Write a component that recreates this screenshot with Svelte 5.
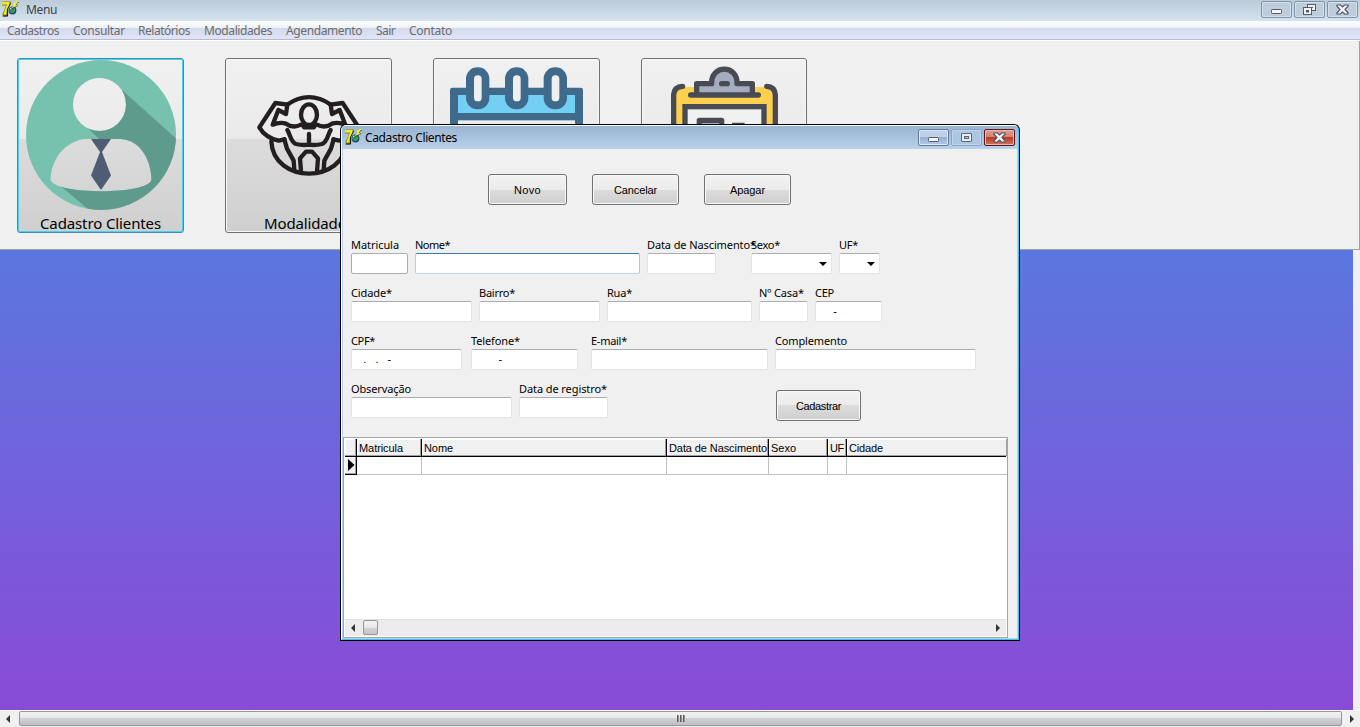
<script>
  const menu = [
    ['Cadastros', 52, 7], ['Consultar', 52, 14], ['Relatórios', 52, 13], ['Modalidades', 68, 14],
    ['Agendamento', 76, 14], ['Sair', 19, 14], ['Contato', 43, 14]
  ];
  const actions = [['Novo', 79, 27, 0], ['Cancelar', 87, 43, 25], ['Apagar', 87, 35, 25]];
  // label, label width, field width, left gap, kind, mask
  const rows = [
    [
      ['Matricula', 48, 57, 0, 'plain'], ['Nome*', 35, 225, 7, 'focus'], ['Data de Nascimento*', 109, 69, 7],
      ['Sexo*', 29, 81, 35, 'combo'], ['UF*', 19, 41, 7, 'combo']
    ],
    [
      ['Cidade*', 41, 121, 0], ['Bairro*', 36, 121, 7], ['Rua*', 25, 145, 7], ['Nº Casa*', 45, 49, 7],
      ['CEP', 19, 67, 7, '', '     -']
    ],
    [
      ['CPF*', 24, 111, 0, '', '   .   .   -'], ['Telefone*', 49, 107, 9, '', '        -'],
      ['E-mail*', 36, 177, 13], ['Complemento', 72, 201, 7]
    ],
    [['Observação', 60, 161, 0], ['Data de registro*', 88, 89, 7]]
  ];
  const columns = [
    ['Matricula', 65, 44], ['Nome', 245, 29], ['Data de Nascimento', 102, 98], ['Sexo', 59, 25], ['UF', 19, 14], ['Cidade', 160, 34]
  ];

  // Spreads the letters so that a caption takes exactly the given width.
  function fit(node, width) {
    const natural = node.getBoundingClientRect().width;
    const gap = (width - natural) / node.textContent.length;
    node.style.letterSpacing = gap + 'px';
  }
</script>

{#snippet appIcon()}
  <svg class="app-icon" width="18" height="18" viewBox="0 0 18 18">
    <path d="M1 1.500H10V4L7.500 8.500L7 16.500H1.500V14L4 8L5 5.500H1Z" fill="#8c8420" />
    <path d="M9.500 3L6.500 9L6.500 16H2" fill="none" stroke="#1d1c10" stroke-width="1" />
    <path d="M1 2H8.500V4L6 9L5.200 14.500H2.500L4.200 9L6 4.500H1Z" fill="#f3e81c" />
    <circle cx="11.500" cy="10.500" r="3.900" fill="#1f4d66" />
    <circle cx="11" cy="10" r="2.900" fill="#3a7f9a" />
    <path d="M10 8L12.500 7.500L14 10L12.500 13L10 12.500L11 10.500Z" fill="#38a044" />
    <path d="M9 9L10 8" stroke="#bfe6ea" />
    <path d="M16.500 .500L12.500 3.500L13.500 5L10.500 8.500L16 6L15 4.500L17.500 1.500Z" fill="#f8f020" />
    <path d="M17.500 2L15.500 4.300L16.500 6L11.500 8.500" fill="none" stroke="#1c1c10" stroke-width=".9" stroke-dasharray="1.500 .8" />
  </svg>
{/snippet}

{#snippet closeGlyph()}
  <svg width="13" height="11" viewBox="0 0 13 11">
    <path d="M1 1H4.5L6.5 3L8.5 1H12V2.2L9 5.5L12 8.8V10H8.5L6.5 8L4.5 10H1V8.8L4 5.5L1 2.2Z" fill="#f3f3f3" stroke="#50566b" stroke-width="1.2" />
  </svg>
{/snippet}

{#snippet minGlyph()}
  <svg width="11" height="5" viewBox="0 0 11 5"><rect x=".5" y=".5" width="10" height="4" rx=".8" fill="#f5f5f5" stroke="#555b6e" /></svg>
{/snippet}

<div class="screen">
  <header class="titlebar">
    {@render appIcon()}
    <span class="title"><span use:fit={31}>Menu</span></span>
    <div class="controls">
      <span class="ctl min">{@render minGlyph()}</span>
      <span class="ctl">
        <svg width="13" height="11" viewBox="0 0 13 11">
          <rect x="4.500" y=".500" width="8" height="6" fill="#f1f1f1" stroke="#555b6e" />
          <rect x="7" y="3" width="3" height="1" fill="#555b6e" />
          <rect x=".500" y="3.500" width="8" height="7" fill="#f5f5f5" stroke="#555b6e" />
          <rect x="3.500" y="6.500" width="2" height="1.500" fill="#a8b5c7" stroke="#555b6e" />
        </svg>
      </span>
      <span class="ctl">{@render closeGlyph()}</span>
    </div>
  </header>

  <nav class="menu">
    {#each menu as [text, width, gap]}
      <span class="menu-item" style="width:{width}px;margin-left:{gap}px"><span use:fit={width}>{text}</span></span>
    {/each}
  </nav>

  <section class="toolbar">
    <div class="tile selected">
      <svg width="167" height="175" viewBox="17 58 167 175">
        <defs>
          <mask id="figure">
            <rect x="17" y="58" width="167" height="175" fill="#fff" />
            <circle cx="99.500" cy="104.500" r="26.500" fill="#000" />
            <path d="M85 139H121C139 140 151 158 151.500 180C147 195 56 195 50.500 180C51 158 66 141 85 139Z" fill="#000" />
          </mask>
          <clipPath id="disc"><circle cx="101" cy="135" r="75" /></clipPath>
        </defs>
        <circle cx="101" cy="135" r="75" fill="#76c2ae" mask="url(#figure)" />
        <g clip-path="url(#disc)">
          <path mask="url(#figure)" d="M122 90L182 144V215H95L57 183L99 139L87 127Z" fill="#5f9b8c" />
        </g>
        <path d="M91 139H111L102 152L111 175.500L101 190L91 175.500L100 152Z" fill="#4f5d73" />
      </svg>
      <span class="caption"><span use:fit={121}>Cadastro Clientes</span></span>
    </div>
    <div class="tile">
      <svg width="167" height="175" viewBox="-81 -90 501 525">
        <g fill="none" stroke="#231f20" stroke-width="13" stroke-linejoin="round" stroke-linecap="round">
          <path d="M105 50Q171 5 237 50" />
          <path d="M58 160C64 289 278 289 284 160" />
          <ellipse cx="171" cy="80" rx="24" ry="31" />
          <path d="M106 50L102 78L79 66L62 110Q84 101 102 107C117 118 132 118 147 110Q153 110 156 118H186Q189 110 195 110C210 118 225 118 240 107Q258 101 280 110L263 66L240 78L236 50" />
          <path d="M106 50L70 45L22 118Q40 149 80 158L98 154M236 50L272 45L320 118Q302 149 262 158L244 154" />
          <path d="M106 126C115 140 116 162 132 168Q152 173 171 170Q190 173 210 168C226 162 227 140 236 126M171 138V170" />
          <path d="M97 154L105 182L125 218L127 247M245 154L237 182L217 218L215 247" />
          <path d="M147 250L144 211L162 191H180L198 211L195 250" />
        </g>
      </svg>
      <span class="caption"><span use:fit={89}>Modalidades</span></span>
    </div>
    <div class="tile">
      <svg width="167" height="175" viewBox="39 24 501 525">
        <rect x="90" y="113" width="399" height="340" rx="7" fill="#3f6a8c" />
        <rect x="114" y="135" width="351" height="54" fill="#74cff4" />
        <rect x="114" y="211" width="351" height="220" fill="#eceded" />
        {#each [138, 255, 371] as x}
          <rect {x} y="52" width="70" height="126" rx="34" fill="#3f6a8c" />
          <rect x={x + 24} y="76" width="23" height="78" rx="11" fill="#efefef" />
        {/each}
      </svg>
      <span class="caption">Agendamento</span>
    </div>
    <div class="tile narrow">
      <svg width="167" height="175" viewBox="663 24 501 525">
        <rect x="764" y="111" width="301" height="350" rx="14" fill="#ffd04d" />
        <path d="M788 109Q763 110 761 134V450M1040 109Q1064 110 1066 134V450" fill="none" stroke="#484b54" stroke-width="16" stroke-linecap="round" />
        <rect x="795" y="170" width="237" height="280" fill="#f0f1f1" stroke="#484b54" stroke-width="16" />
        <path d="M830 131V101H875C872 43 954 43 951 101H997V131" fill="#a3adbf" stroke="#484b54" stroke-width="16" stroke-linejoin="round" />
        <path d="M812 135H1015M905 101H922" stroke="#484b54" stroke-width="16" stroke-linecap="round" />
        <path d="M838 230V211H905V230M936 226H974" fill="#a3adbf" stroke="#484b54" stroke-width="16" stroke-linejoin="round" />
      </svg>
      <span class="caption">Relatórios</span>
    </div>
  </section>

  <main class="desk"><div class="backdrop"></div></main>

  <footer class="main-scroll">
    <span class="arrow left"></span>
    <div class="thumb"><i></i><i></i><i></i></div>
    <span class="arrow right"></span>
  </footer>

  <div class="window">
    <div class="inner">
      <div class="win-title">
        {@render appIcon()}
        <span class="title"><span use:fit={92}>Cadastro Clientes</span></span>
        <div class="controls">
          <span class="ctl blue min">{@render minGlyph()}</span>
          <span class="ctl faded">
            <svg width="11" height="9" viewBox="0 0 11 9"><rect x=".500" y=".500" width="10" height="8" rx=".5" fill="#e8ebef" stroke="#5c6478" /><rect x="3.500" y="3.500" width="4" height="2" fill="#a8c0dc" stroke="#5c6478" /></svg>
          </span>
          <span class="ctl red">{@render closeGlyph()}</span>
        </div>
      </div>

      <div class="body">
        <div class="actions">
          {#each actions as [text, width, textWidth, gap]}
            <div class="btn" style="width:{width}px;margin-left:{gap}px"><span use:fit={textWidth}>{text}</span></div>
          {/each}
        </div>

        <div class="form">
          {#each rows as row, r}
            <div class="row">
              {#each row as [label, labelWidth, width, gap, kind, mask]}
                <div class="cell" style="width:{width}px;margin-left:{gap}px">
                  <div class="label"><span use:fit={labelWidth}>{label}</span></div>
                  <div class="field {kind || ''}">{mask || ''}</div>
                </div>
              {/each}
              {#if r === 3}
                <div class="btn save"><span use:fit={45}>Cadastrar</span></div>
              {/if}
            </div>
          {/each}
        </div>

        <div class="grid">
          <div class="grid-head">
            <span class="gutter"></span>
            {#each columns as [text, width, textWidth]}
              <span class="th" style="width:{width}px"><span use:fit={textWidth}>{text}</span></span>
            {/each}
          </div>
          <div class="grid-row">
            <span class="gutter marker"><svg width="7" height="12" viewBox="0 0 7 12"><path d="M0 0L6.500 6L0 12Z" /></svg></span>
            {#each columns as [, width]}
              <span class="td" style="width:{width}px"></span>
            {/each}
          </div>
          <div class="grid-space"></div>
          <div class="grid-scroll">
            <span class="arrow left"></span>
            <span class="mini-thumb"></span>
            <span class="arrow right"></span>
          </div>
        </div>
      </div>
    </div>
  </div>
</div>

<style>
  :global(body) { overflow: hidden; }
  .screen, .screen * { box-sizing: border-box; }
  .screen { position: relative; width: 1360px; height: 727px; overflow: hidden; display: flex; flex-direction: column; background: #f0f0f0; font: 12px "Noto Sans", "Open Sans", sans-serif; color: #000; }
  svg { display: block; flex: none; }
  span { white-space: pre; }

  .titlebar { height: 21px; flex: none; display: flex; background: linear-gradient(#bccbd9, #d5e3f0); color: #3c434a; padding-left: 1px; }
  .titlebar .title { margin-left: 7px; line-height: 19px; }
  .controls { margin-left: auto; display: flex; gap: 2px; }
  .titlebar .controls { padding: 1px 2px 0 0; }
  .ctl { width: 31px; height: 17px; display: flex; align-items: center; justify-content: center; border: 1px solid #8393a9; border-radius: 2px; box-shadow: inset 0 0 0 1px #d3dfe9; background: #bfcddb; }
  .ctl.min { padding-top: 4px; }

  .menu { height: 20px; flex: none; display: flex; color: #6d6d6d; background: linear-gradient(#fff 0, #edf1f8 7px, #d3daed 7px, #e0e5f7 18px, #b6bccc 18px, #b6bccc 19px, #fff 19px); }
  .menu-item { line-height: 20px; height: 20px; }

  .toolbar { height: 209px; flex: none; display: flex; gap: 41px; padding: 17px 0 0 17px; border-bottom: 1px solid #a0a0a0; border-right: 1px solid #a0a0a0; }
  .tile { position: relative; width: 167px; height: 175px; border-radius: 3px; border: 1px solid #707070; box-shadow: inset 0 0 0 1px #f8f8f8; background: linear-gradient(#f1f1f1, #eaeaea 46%, #dcdcdc 46%, #cfcfcf); }
  .tile.narrow { width: 166px; }
  .tile.selected { border-color: #3c8cb6; box-shadow: inset 0 0 0 1px #48d0f5; }
  .tile svg { margin: -1px; }
  .caption { position: absolute; left: 0; right: 0; bottom: -2px; text-align: center; font-size: 15px; line-height: 22px; }

  .desk { height: 460px; flex: none; display: flex; }
  .backdrop { width: 1353px; background: linear-gradient(#5b77e0, #8a4bd6); }

  .main-scroll { height: 17px; flex: none; display: flex; border-top: 1px solid #fff; background: #f0f0f0; }
  .main-scroll .arrow { width: 19px; }
  .main-scroll .right { width: 18px; padding-left: 1px; }
  .thumb { flex: 1; height: 15px; display: flex; gap: 1px; align-items: center; justify-content: center; border: 1px solid #979797; border-radius: 2px; background: linear-gradient(#f3f3f3, #e6e7e8 45%, #d2d3d6 46%, #bebfc4); }
  .thumb i { width: 2px; height: 7px; background: linear-gradient(90deg, #444, #aaa); }
  .arrow { display: flex; align-items: center; justify-content: center; }
  .arrow::before { content: ""; border: solid transparent; border-width: 4px 0; }
  .arrow.left::before { border-right: 4px solid #333; }
  .arrow.right::before { border-left: 4px solid #333; }
  .main-scroll .left { padding-right: 4px; }

  .window { position: absolute; left: 340px; top: 124px; width: 680px; height: 517px; background: #000; border-radius: 6px 6px 0 0; padding: 1px; }
  .inner { height: 100%; border-radius: 5px 5px 0 0; border: 1px solid #35c7ef; border-left-color: #fff; border-top-color: #f6fbff; background: #b9d1ea; padding: 0 1px 1px; display: flex; flex-direction: column; }
  .win-title { height: 23px; display: flex; background: linear-gradient(#99b4d1, #b9d1ea); border-radius: 4px 4px 0 0; margin: 0 -1px; padding-left: 2px; }
  .win-title .title { margin-left: 3px; line-height: 23px; font-size: 12px; }
  .win-title .app-icon { margin-top: 2px; }
  .win-title .controls { padding: 3px 3px 0 0; }
  .ctl.blue { border-color: #60799c; background: linear-gradient(#bfd0e8 50%, #97b0d2 50%, #afcbe8); box-shadow: inset 0 0 0 1px #dce9f7; }
  .ctl.faded { border-color: #8ca5c6; background: #adc6e1; box-shadow: inset 0 0 0 1px #bfd4eb; }
  .ctl.red { border-color: #5b1720; background: linear-gradient(#e49c91, #d47e70 50%, #b83a22 50%, #d6755c); box-shadow: inset 0 0 0 1px #efb6ac; }

  .body { flex: 1; display: flex; flex-direction: column; background: #f0f0f0; padding-top: 25px; }
  .actions { display: flex; padding-left: 145px; height: 31px; }
  .btn { height: 31px; display: flex; align-items: center; justify-content: center; font: 11px "Liberation Sans", sans-serif; border: 1px solid #707070; border-radius: 3px; box-shadow: inset 0 0 0 1px #fafafa; background: linear-gradient(#f2f2f2, #ebebeb 50%, #dcdcdc 50%, #cfcfcf); }
  .form { display: flex; flex-direction: column; gap: 12px; padding: 33px 0 0 8px; height: 232px; }
  .row { display: flex; height: 36px; flex: none; }
  .cell { flex: none; }
  .label { height: 15px; line-height: 14px; font-size: 11px; }
  .field { height: 21px; background: #fff; border: 1px solid #e2e3ea; border-top-color: #abadb3; border-radius: 2px; font: 11px/19px "Liberation Sans", sans-serif; white-space: pre; padding-left: 2px; }
  .field.plain { border-color: #abadb3; }
  .field.focus { border-color: #3d7bad #a4c9e3 #b7d9ed #b5cfe7; }
  .combo { display: flex; align-items: center; justify-content: flex-end; padding-right: 4px; }
  .combo::after { content: ""; border: 4px solid transparent; border-bottom: 0; border-top-color: #000; margin-top: 1px; }
  .save { width: 85px; margin: 8px 0 0 168px; flex: none; }

  .grid { width: 665px; height: 201px; border: 1px solid #a5a5a5; background: #fff; padding: 1px; display: flex; flex-direction: column; overflow: hidden; }
  .grid-head { display: flex; height: 18px; flex: none; border-bottom: 1px solid #000; background: #f0f0f0; font: 11px/18px "Liberation Sans", sans-serif; }
  .gutter { width: 12px; flex: none; border-right: 1px solid #000; box-shadow: inset -1px -1px #a0a0a0, inset 1px 1px #fff; }
  .th { flex: none; padding-left: 2px; border-right: 1px solid #000; box-shadow: inset -1px -1px #a0a0a0, inset 1px 1px #fff; }
  .th:last-child { border-right: 0; }
  .grid-row { display: flex; height: 18px; flex: none; }
  .grid-row .gutter { background: #f0f0f0; border-bottom: 1px solid #000; }
  .marker { padding: 2px 0 0 3px; }
  .td { flex: none; border-right: 1px solid #c0c0c0; border-bottom: 1px solid #c0c0c0; }
  .td:last-child { border-right: 0; }
  .grid-space { flex: 1; }
  .grid-scroll { height: 17px; flex: none; display: flex; background: #ececec; border-top: 1px solid #e2e2e2; }
  .grid-scroll .arrow { width: 17px; }
  .grid-scroll .left { padding-right: 2px; }
  .mini-thumb { width: 15px; height: 15px; margin-left: 1px; border: 1px solid #979797; border-radius: 2px; background: linear-gradient(#f3f3f3, #e6e7e8 50%, #d2d3d6 51%, #c4c5c9); }
  .grid-scroll .right { margin-left: auto; }
</style>
